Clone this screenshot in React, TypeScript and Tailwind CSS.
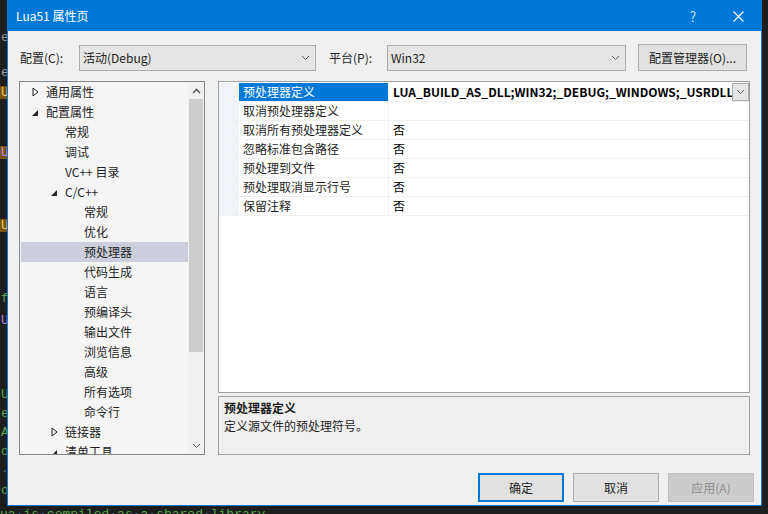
import React from "react";

const ui = "font-['Noto_Sans_CJK_SC','Noto_Sans',sans-serif]";
const mono = "font-['Liberation_Mono',monospace]";

type TreeItem = { label: string; level: 0 | 1 | 2; state?: "open" | "closed"; selected?: boolean };

const tree: TreeItem[] = [
  { label: "通用属性", level: 0, state: "closed" },
  { label: "配置属性", level: 0, state: "open" },
  { label: "常规", level: 1 },
  { label: "调试", level: 1 },
  { label: "VC++ 目录", level: 1 },
  { label: "C/C++", level: 1, state: "open" },
  { label: "常规", level: 2 },
  { label: "优化", level: 2 },
  { label: "预处理器", level: 2, selected: true },
  { label: "代码生成", level: 2 },
  { label: "语言", level: 2 },
  { label: "预编译头", level: 2 },
  { label: "输出文件", level: 2 },
  { label: "浏览信息", level: 2 },
  { label: "高级", level: 2 },
  { label: "所有选项", level: 2 },
  { label: "命令行", level: 2 },
  { label: "链接器", level: 1, state: "closed" },
  { label: "清单工具", level: 1, state: "open" },
];

const props = [
  { name: "预处理器定义", value: "LUA_BUILD_AS_DLL;WIN32;_DEBUG;_WINDOWS;_USRDLL;%(PreprocessorDefinitions)", selected: true },
  { name: "取消预处理器定义", value: "" },
  { name: "取消所有预处理器定义", value: "否" },
  { name: "忽略标准包含路径", value: "否" },
  { name: "预处理到文件", value: "否" },
  { name: "预处理取消显示行号", value: "否" },
  { name: "保留注释", value: "否" },
];

// fragments of the code editor peeking out behind the dialog
const editorBits = [
  { h: "h-[27px]", ch: "" },
  { h: "h-[20px]", ch: "e", cls: "text-[#9a9a9a]" },
  { h: "h-[15px]", ch: "" },
  { h: "h-[20px]", ch: "e", cls: "text-[#9a9a9a]" },
  { h: "h-[20px]", ch: "U", cls: "bg-[#7a5200] text-[#e8c88a]" },
  { h: "h-[40px]", ch: "" },
  { h: "h-[20px]", ch: "U", cls: "bg-[#7a5200] text-[#c58af0]" },
  { h: "h-[53px]", ch: "" },
  { h: "h-[20px]", ch: "U", cls: "bg-[#7a5200] text-[#e8c88a]" },
  { h: "h-[53px]", ch: "" },
  { h: "h-[20px]", ch: "f", cls: "text-[#57a64a]" },
  { h: "h-[2px]", ch: "" },
  { h: "h-[20px]", ch: "U", cls: "text-[#b87fd8]" },
  { h: "h-[55px]", ch: "" },
  { h: "h-[19px]", ch: "U", cls: "text-[#57a64a]" },
  { h: "h-[19px]", ch: "e", cls: "text-[#57a64a]" },
  { h: "h-[19px]", ch: "A", cls: "text-[#57a64a]" },
  { h: "h-[19px]", ch: "o", cls: "text-[#57a64a]" },
  { h: "h-[20px]", ch: "·", cls: "text-[#3c6e8a]" },
  { h: "h-[19px]", ch: "o", cls: "text-[#57a64a]" },
];

function Chevron({ up = false, color = "#606060", w = 9 }: { up?: boolean; color?: string; w?: number }) {
  return (
    <svg width={w} height="6" viewBox="0 0 9 6">
      <polyline
        points={up ? "1,5 4.5,1.5 8,5" : "1,1 4.5,4.5 8,1"}
        fill="none"
        stroke={color}
        strokeWidth={up ? 1.6 : 1}
      />
    </svg>
  );
}

function Expander({ state }: { state?: "open" | "closed" }) {
  if (state === "closed") {
    return (
      <svg width="7" height="10" viewBox="0 0 7 10">
        <polygon points="1,1 6,5 1,9" fill="none" stroke="#1e1e1e" strokeWidth="1" />
      </svg>
    );
  }
  if (state === "open") {
    return (
      <svg width="7" height="10" viewBox="0 0 7 10">
        <polygon points="6,3 6,9 0,9" fill="#262626" />
      </svg>
    );
  }
  return null;
}

function Select({ value, width }: { value: string; width: string }) {
  return (
    <div className={`${width} h-[26px] flex items-center justify-between bg-[#e5e5e5] border border-[#acacac] pl-[3px] pr-[5px]`}>
      <span className="text-[12px] text-[#1e1e1e]">{value}</span>
      <Chevron />
    </div>
  );
}

function Button({ label, kind }: { label: string; kind?: "default" | "disabled" }) {
  const cls =
    kind === "default"
      ? "border-2 border-[#0078d7] bg-[#e1e1e1] text-[#1e1e1e]"
      : kind === "disabled"
      ? "border border-[#bfbfbf] bg-[#cccccc] text-[#8d8d8d]"
      : "border border-[#adadad] bg-[#e1e1e1] text-[#1e1e1e]";
  return (
    <div className={`w-[86px] h-[29px] flex items-center justify-center text-[12px] ${cls}`}>{label}</div>
  );
}

function TreeRow({ item }: { item: TreeItem }) {
  const indent = item.level === 0 ? "pl-[11px]" : item.level === 1 ? "pl-[30px]" : "pl-[49px]";
  return (
    <div
      className={`h-[20px] shrink-0 flex items-center ${indent} ${item.selected ? "bg-[#cccedb]" : ""}`}
    >
      <div className="w-[14px] flex items-center">
        <Expander state={item.state} />
      </div>
      <span className="text-[12px] text-[#1e1e1e] whitespace-nowrap">{item.label}</span>
    </div>
  );
}

export default function App() {
  return (
    <div className={`w-[768px] h-[514px] bg-[#1e1e1e] flex flex-col overflow-hidden ${ui}`}>
      <div className="flex h-[506px] shrink-0">
        {/* editor behind */}
        <div className={`w-[7px] shrink-0 overflow-hidden flex flex-col ${mono} text-[13px]`}>
          {editorBits.map((b, i) => (
            <div key={i} className={`${b.h} shrink-0 flex items-center leading-none`}>
              {b.ch && <span className={`px-[1px] ${b.cls ?? ""}`}>{b.ch}</span>}
            </div>
          ))}
        </div>

        {/* dialog */}
        <div className="w-[755px] shrink-0 flex flex-col border border-[#0078d7]">
          {/* title bar */}
          <div className="h-[30px] shrink-0 bg-[#0078d7] flex items-center pl-[8px] pr-[17px] text-white">
            <span className="text-[12px] flex-1">Lua51 属性页</span>
            <span className="text-[14px] font-light mr-[37px]">?</span>
            <svg width="11" height="11" viewBox="0 0 11 11">
              <path d="M0.5 0.5 L10.5 10.5 M10.5 0.5 L0.5 10.5" stroke="white" strokeWidth="1.1" />
            </svg>
          </div>

          {/* body */}
          <div className="flex-1 bg-[#f0f0f0] flex flex-col pl-[11px] pr-[7px] pt-[13px]">
            {/* configuration row */}
            <div className="flex items-center h-[27px]">
              <span className="w-[60px] pl-[1px] text-[12px] text-[#1e1e1e]">配置(C):</span>
              <Select value="活动(Debug)" width="w-[237px]" />
              <span className="w-[58px] ml-[13px] text-[12px] text-[#1e1e1e]">平台(P):</span>
              <Select value="Win32" width="w-[239px]" />
              <div className="ml-[12px] w-[109px] h-[27px] flex items-center justify-center bg-[#e1e1e1] border border-[#adadad] text-[12px] text-[#1e1e1e]">
                配置管理器(O)...
              </div>
            </div>

            {/* main area */}
            <div className="flex mt-[10px] h-[374px]">
              {/* tree */}
              <div className="w-[186px] shrink-0 border border-[#828790] bg-[#f5f5f5] flex overflow-hidden">
                <div className="flex-1 flex flex-col pl-[1px] overflow-hidden">
                  {tree.map((t, i) => (
                    <TreeRow key={i} item={t} />
                  ))}
                </div>
                <div className="w-[16px] shrink-0 bg-[#f0f0f0] flex flex-col items-center">
                  <div className="h-[17px] w-full flex items-center justify-center">
                    <Chevron up />
                  </div>
                  <div className="w-[14px] h-[253px] bg-[#cdcdcd]" />
                  <div className="flex-1" />
                  <div className="h-[17px] w-full flex items-center justify-center">
                    <Chevron color="#505050" />
                  </div>
                </div>
              </div>

              {/* right column */}
              <div className="ml-[13px] w-[532px] flex flex-col">
                <div className="h-[312px] border border-[#a0a0a0] bg-white flex flex-col pt-[1px]">
                  {props.map((p, i) => (
                    <div key={i} className="h-[19px] flex border-b border-[#f0f0f0]">
                      <div className="w-[20px] shrink-0 bg-[#f0f3f8]" />
                      <div
                        className={`w-[150px] shrink-0 flex items-center pl-[4px] text-[12px] border-r border-[#f0f0f0] ${
                          p.selected ? "bg-[#0078d7] text-white" : "text-[#1e1e1e]"
                        }`}
                      >
                        {p.name}
                      </div>
                      <div className="flex-1 flex items-center min-w-0">
                        <span
                          className={`flex-1 pl-[4px] text-[12px] text-[#000] whitespace-nowrap overflow-hidden ${
                            p.selected ? "font-bold" : ""
                          }`}
                        >
                          {p.value}
                        </span>
                        {p.selected && (
                          <div className="w-[17px] h-[18px] shrink-0 bg-[#e5e5e5] border border-[#acacac] flex items-center justify-center">
                            <Chevron />
                          </div>
                        )}
                      </div>
                    </div>
                  ))}
                </div>
                <div className="mt-[3px] flex-1 border border-[#a0a0a0] bg-[#efefef] px-[5px] pt-[2px] flex flex-col">
                  <span className="text-[12px] font-bold text-[#1e1e1e] leading-[18px]">预处理器定义</span>
                  <span className="text-[12px] text-[#1e1e1e] leading-[18px]">定义源文件的预处理符号。</span>
                </div>
              </div>
            </div>

            {/* buttons */}
            <div className="flex justify-end gap-[9px] mt-[18px]">
              <Button label="确定" kind="default" />
              <Button label="取消" />
              <Button label="应用(A)" kind="disabled" />
            </div>
          </div>
        </div>
        <div className="flex-1" />
      </div>

      {/* editor line below the dialog */}
      <div className="h-[8px] shrink-0 overflow-hidden">
        <div className={`${mono} text-[13px] leading-[15px] text-[#57a64a] whitespace-pre mt-[1px]`}>
          {"ua"}
          <span className="text-[#3c6e8a]">·</span>
          {"is"}
          <span className="text-[#3c6e8a]">·</span>
          {"compiled"}
          <span className="text-[#3c6e8a]">·</span>
          {"as"}
          <span className="text-[#3c6e8a]">·</span>
          {"a"}
          <span className="text-[#3c6e8a]">·</span>
          {"shared"}
          <span className="text-[#3c6e8a]">·</span>
          {"library."}
        </div>
      </div>
    </div>
  );
}
